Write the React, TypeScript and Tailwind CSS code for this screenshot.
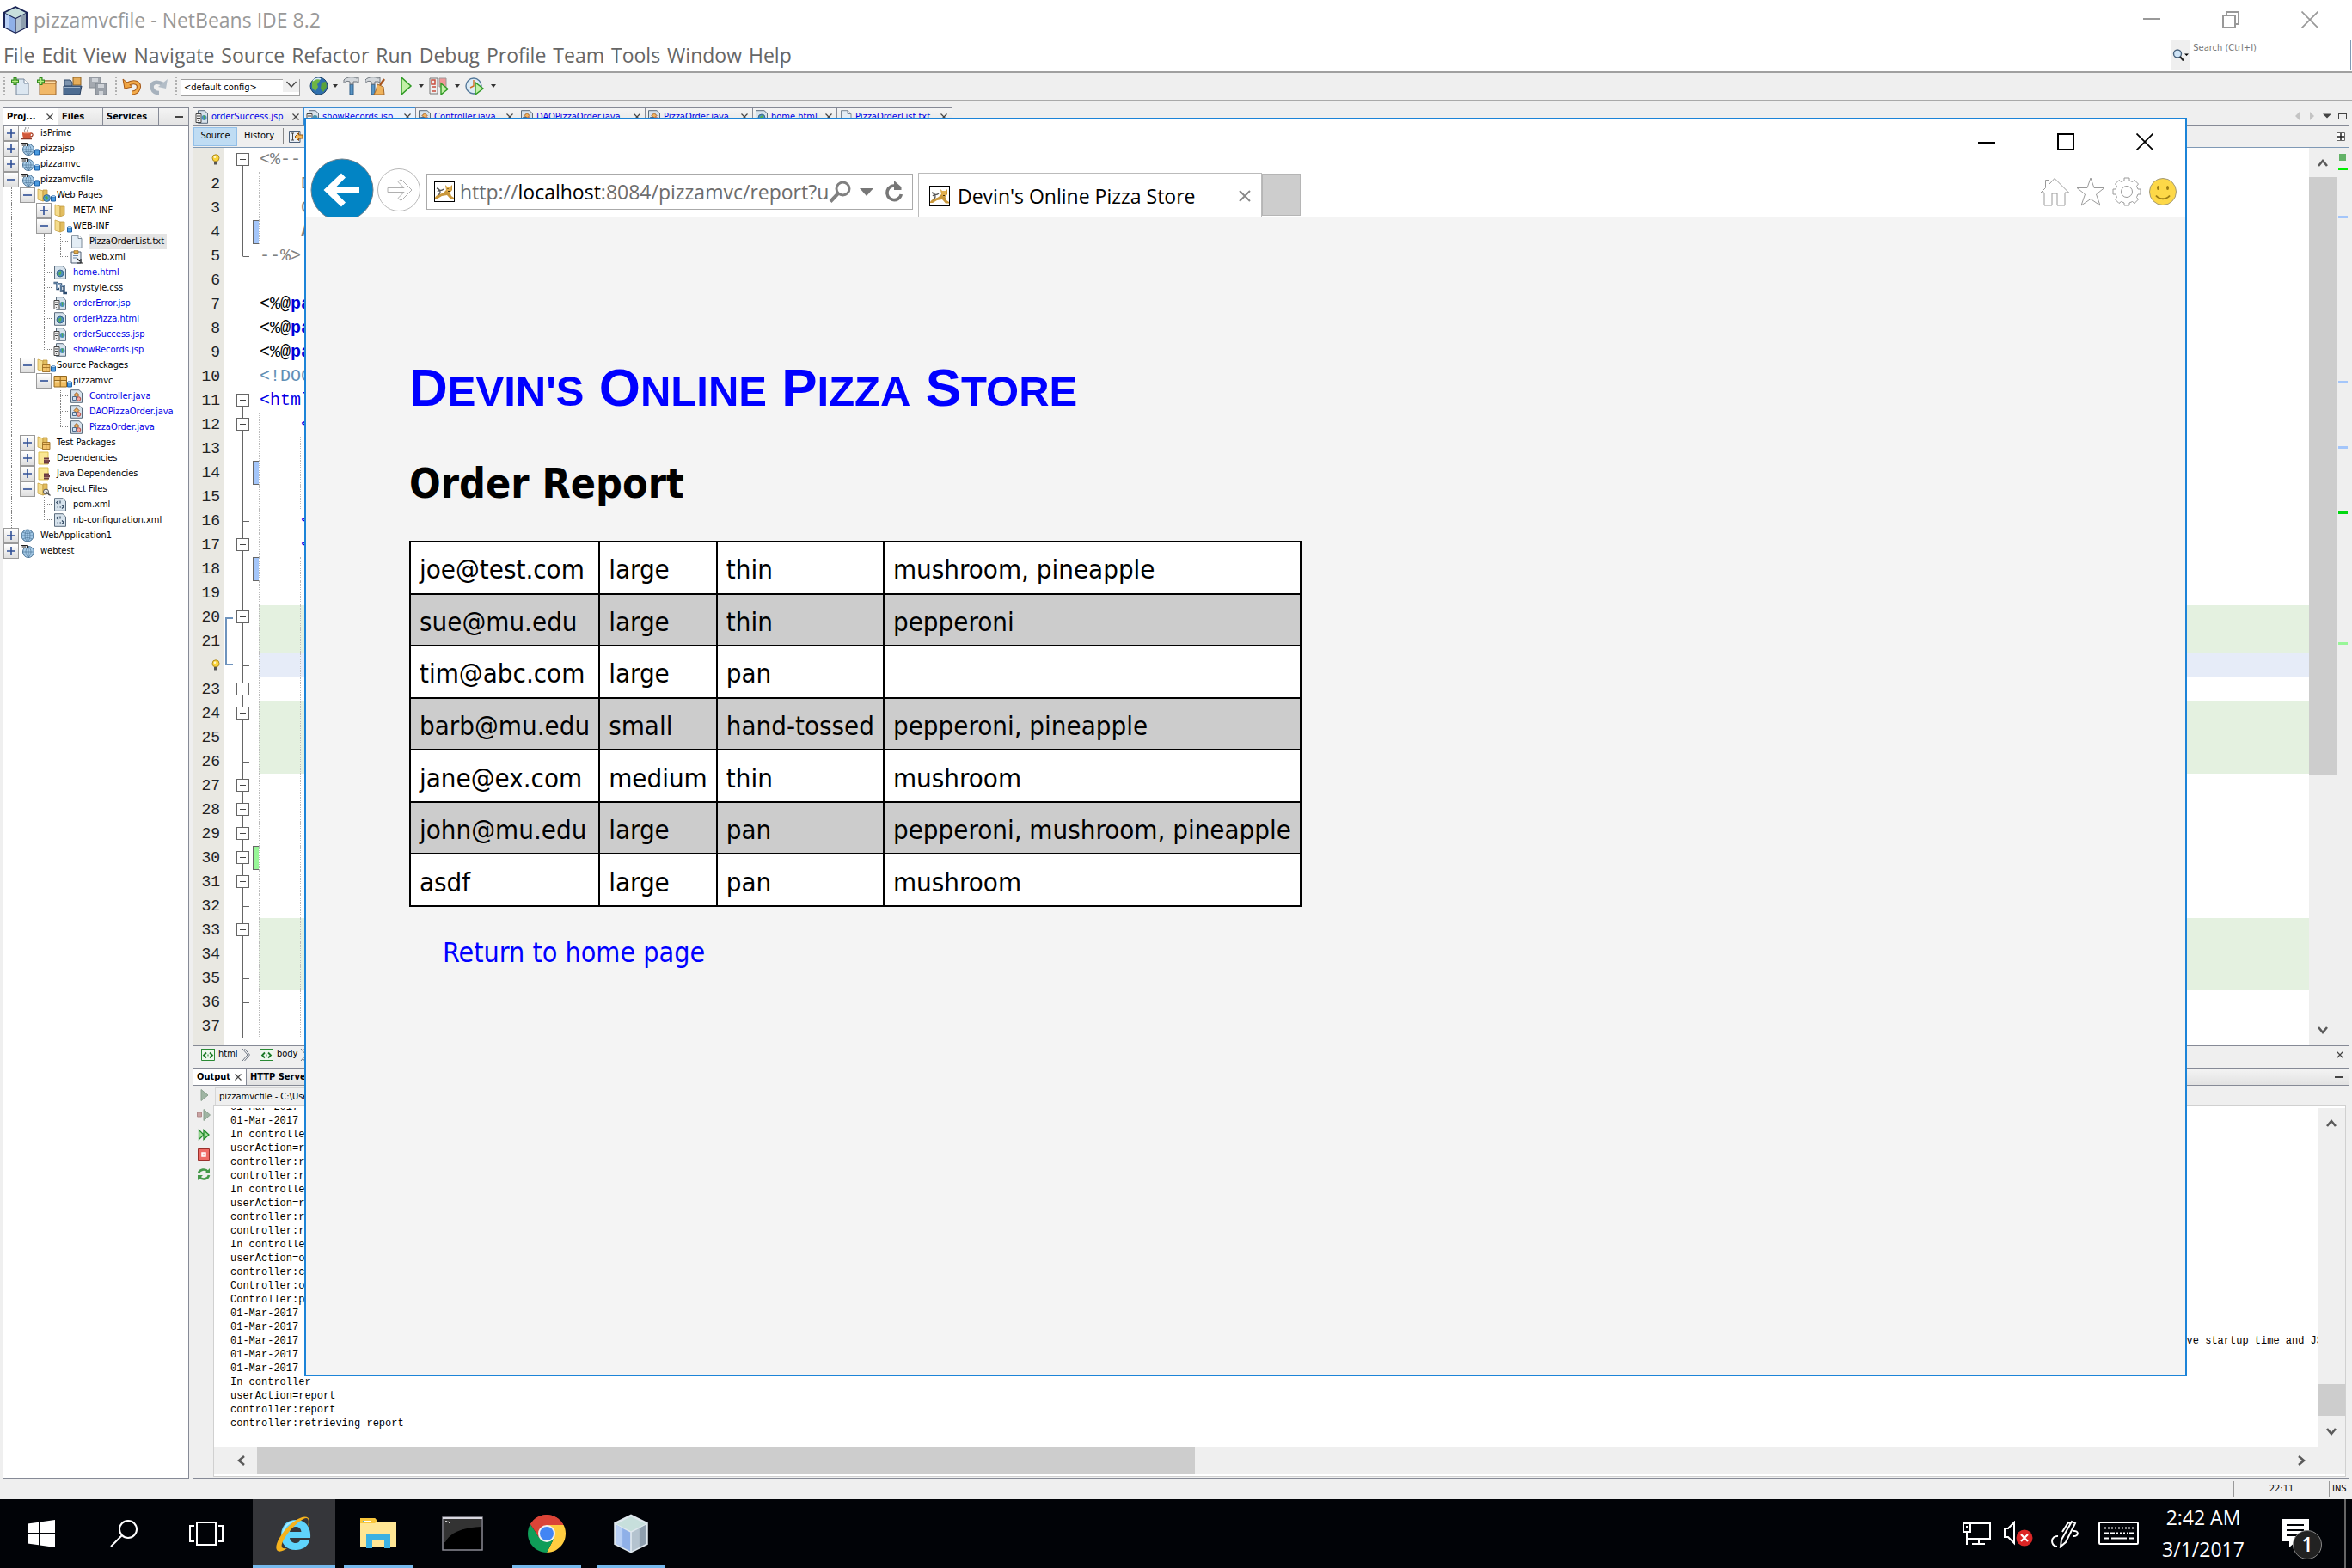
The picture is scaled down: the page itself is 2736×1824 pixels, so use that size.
import React from "react";

type IconProps = { className?: string };

const TAHOMA = "font-['DejaVu_Sans_Condensed','DejaVu_Sans',sans-serif]";
const SEGOE = "font-['Open_Sans','Noto_Sans',sans-serif]";
const MONO = "font-['Liberation_Mono',monospace]";

/* ---------- logos ---------- */

function Cube({ className, outlined }: IconProps & { outlined?: boolean }) {
  return (
    <svg viewBox="0 0 32 34" className={className} aria-hidden="true">
      <path d="M16 1 30 8V26L16 33 2 26V8Z" fill={outlined ? "#1b2556" : "#dfe8ee"} />
      <path d="M16 3 28 9 16 15 4 9Z" fill="#c7dfdc" />
      <path d="M4 10 15.400 16V31.500L4 25.500Z" fill="#8fb0e8" />
      <path d="M4 10 9 12.500V28L4 25.500Z" fill="#b9d0f5" />
      <path d="M28 10 16.600 16V31.500L28 25.500Z" fill="#b4c3cf" />
      <path d="M28 10 23 12.500V28L28 25.500Z" fill="#8e9fae" />
    </svg>
  );
}

function TomcatIcon({ className }: IconProps) {
  return (
    <svg viewBox="0 0 24 24" className={className} aria-hidden="true">
      <rect x="0.500" y="0.500" width="23" height="23" fill="#fff" stroke="#000" />
      <path d="M1 19C3 15 8 15 11 13L14 10 13 4 15.500 6.500H18.500L21 4V10L18.500 13 20 17 23 19V20.500H19L15 16 9 17 4 20H1Z" fill="#c9973a" />
      <path d="M14 6H20L19.500 11 17 13 14.500 11Z" fill="#e2b04f" />
      <path d="M4 16C9 14 7 9 3 8M4 12C6 9 8 12 11 9" fill="none" stroke="#555" strokeWidth="1.300" />
      <path d="M15.500 8.500H16.500M18 8.500H19M16 11.500H18" stroke="#3d2d0d" strokeWidth="1" />
    </svg>
  );
}

function WindowsIcon() {
  return (
    <svg viewBox="0 0 32 32" className="size-8" fill="#fff" aria-hidden="true">
      <path d="M0 4.500 13 2.700V15H0ZM14.500 2.500 32 0V15H14.500ZM0 16.500H13V29.300L0 27.500ZM14.500 16.500H32V32L14.500 29.500Z" />
    </svg>
  );
}

function ExplorerE() {
  return (
    <svg viewBox="0 0 44 44" className="size-11" aria-hidden="true">
      <path d="M24 6C13 6 7 14 7 24S13 41 24 41C32 41 38 37 40 30H29C28 32 26.500 33 24 33 20 33 17.500 30.500 17 27H41C42 14 35 6 24 6ZM17 20C17.500 16 20 14 24 14S30 16 30.500 20Z" fill="#5fd4fb" />
      <path d="M24 8C15 8 9 15 9 24" fill="none" stroke="#a9ecff" strokeWidth="2" />
      <path d="M38 14C44 1 34-1 22 8 8 18-3 38 3 42 6 44 11 41 14 39 8 40 6 38 9 31 13 22 25 9 33 5 39 2 40 7 38 14Z" fill="#f5b21c" />
    </svg>
  );
}

function FolderLarge() {
  return (
    <svg viewBox="0 0 42 36" className="h-9 w-[42px]" aria-hidden="true">
      <path d="M0 0H17L20 4H42V34H0Z" fill="#ffe694" />
      <path d="M0 0H17L20 3 17 6H0Z" fill="#f8c63b" />
      <path d="M3 3H12V5H3Z" fill="#fff" />
      <path d="M3 3H5V5H3Z" fill="#3bb1e3" />
      <path d="M7 18H35V35H28V25H14V35H7Z" fill="#3bb1e3" />
    </svg>
  );
}

function ConsoleIcon() {
  return (
    <svg viewBox="0 0 48 40" className="h-10 w-12" aria-hidden="true">
      <rect x="1" y="1" width="46" height="38" fill="#000" stroke="#8a8a94" strokeWidth="1.500" />
      <path d="M2 3H46V12C25 13 10 18 4 30H2Z" fill="#333" />
      <path d="M1 2H47" stroke="#d8d8e0" strokeWidth="2" />
      <path d="M4 5.500H6M7 5.500V7M8 7.500H10" stroke="#ccc" />
    </svg>
  );
}

function ChromeIcon() {
  return (
    <svg viewBox="0 0 44 44" className="size-11" aria-hidden="true">
      <path d="M22 22 2.950 11A22 22 0 0 1 41.050 11Z" fill="#db4437" />
      <path d="M22 12H41.600A22 22 0 0 1 22 44L30.700 27Z" fill="#ffcd40" />
      <path d="M13.300 27 2.950 11A22 22 0 0 0 22 44L30.700 27Z" fill="#0f9d58" />
      <path d="M22 12H41.600A22 22 0 0 0 2.950 11L13.300 27Z" fill="#db4437" />
      <circle cx="22" cy="22" r="10" fill="#f1f1f1" />
      <circle cx="22" cy="22" r="8" fill="#4285f4" />
    </svg>
  );
}

/* ---------- project tree icons ---------- */

function Glyph({ kind }: { kind: string }) {
  const body: Record<string, React.ReactNode> = {
    cup: (
      <>
        <path d="M2 7H12C12 12 11 14 9.500 15H4.500C3 14 2 12 2 7Z" fill="#d1583a" />
        <path d="M12 8C15 8 15 12 11 12" fill="none" stroke="#a8432c" strokeWidth="1.300" />
        <path d="M1 14.500H13" stroke="#8b3a2a" strokeWidth="1.500" />
        <path d="M5 6C3 4 7 3 5.500 1M8 6C6.500 4 10 3 9 1" fill="none" stroke="#777" />
        <ellipse cx="7" cy="7" rx="5" ry="1.300" fill="#f0a68f" />
      </>
    ),
    web: (
      <>
        <circle cx="8" cy="8" r="7" fill="#9fc6e6" stroke="#466f92" />
        <path d="M1 8H15M8 1V15M3 4C6 6 10 6 13 4M3 12C6 10 10 10 13 12M8 1C4 4 4 12 8 15M8 1C12 4 12 12 8 15" fill="none" stroke="#557d9f" strokeWidth="0.800" />
      </>
    ),
    mweb: (
      <>
        <circle cx="9" cy="9" r="6.500" fill="#a9cde9" stroke="#466f92" />
        <path d="M3 9H15M9 3V15M4 12C7 11 11 11 14 12M9 3C5 6 5 12 9 15M9 3C13 6 13 12 9 15" fill="none" stroke="#557d9f" strokeWidth="0.800" />
        <path d="M0 0H8V5H0Z" fill="#fff" opacity="0.700" />
        <path d="M0.700 5V1.500H3V5M3 1.500H5V5M5 1.500H7.500V5" fill="none" stroke="#222" strokeWidth="1" />
      </>
    ),
    folder: (
      <>
        <path d="M2 1 8 3V15L2 13Z" fill="#f5dc8c" stroke="#c9a448" strokeWidth="0.800" />
        <path d="M8 3H13L13 13 8 15Z" fill="#e2bd60" stroke="#c09a40" strokeWidth="0.800" />
      </>
    ),
    webfolder: (
      <>
        <path d="M1 1 7 3V15L1 13Z" fill="#f5dc8c" stroke="#c9a448" strokeWidth="0.800" />
        <path d="M7 2H12V13L7 15Z" fill="#e2bd60" stroke="#c09a40" strokeWidth="0.800" />
        <circle cx="11.500" cy="11.500" r="4" fill="#4e9ad0" stroke="#2b5d86" strokeWidth="0.800" />
        <path d="M9 10 12 9 13 12 11 14Z" fill="#4fae49" />
      </>
    ),
    srcfolder: (
      <>
        <path d="M1 1 7 3V15L1 13Z" fill="#f5dc8c" stroke="#c9a448" strokeWidth="0.800" />
        <path d="M7 2H12V13L7 15Z" fill="#e2bd60" stroke="#c09a40" strokeWidth="0.800" />
        <path d="M6.500 7.500H15V15.500H6.500Z" fill="#f2c36b" stroke="#9c6e24" strokeWidth="0.900" />
        <path d="M6.500 10.500H15M10.700 7.500V15.500" stroke="#9c6e24" strokeWidth="0.900" />
      </>
    ),
    package: (
      <>
        <path d="M1 2.500H15.500V15H1Z" fill="#efbd61" stroke="#94681f" />
        <path d="M1 7.500H15.500M8.200 2.500V15" stroke="#94681f" />
        <path d="M2 3.500H7M9.500 3.500H14.500M2 8.800H7M9.500 8.800H14.500" stroke="#fde6b0" />
      </>
    ),
    deps: (
      <>
        <path d="M2 1H13V15H2Z" fill="#fae793" stroke="#dcbf4f" />
        <path d="M8 8.500H14M8 11H15M8 13.500H14" stroke="#6b3940" strokeWidth="2" />
        <path d="M9 9.800H14M9 12.300H15" stroke="#b48a90" strokeWidth="0.600" />
      </>
    ),
    projfolder: (
      <>
        <path d="M1 1 7 3V15L1 13Z" fill="#f5dc8c" stroke="#c9a448" strokeWidth="0.800" />
        <path d="M7 2H12V13L7 15Z" fill="#e2bd60" stroke="#c09a40" strokeWidth="0.800" />
        <circle cx="10.500" cy="11" r="3" fill="#eee" stroke="#555" />
        <path d="M12 12 15.500 15.500M10 10 14 15" stroke="#555" strokeWidth="1.200" />
      </>
    ),
    file: (
      <>
        <path d="M2.500 0.700H10L14 4.500V15.300H2.500Z" fill="#e3edf5" stroke="#7a8896" />
        <path d="M10 0.700V4.500H14" fill="#fff" stroke="#7a8896" />
      </>
    ),
    webxml: (
      <>
        <path d="M2 2H13V15H2Z" fill="#eef3f8" stroke="#4c5d72" />
        <path d="M5 0.700H10V3.500H5Z" fill="#e6b04a" stroke="#9c6e24" strokeWidth="0.800" />
        <path d="M4 6.500H10M4 9H8M4 11.500H7" stroke="#6b89ab" />
        <path d="M9 10 12 13M13 10V15.500M9 15H15" stroke="#222" strokeWidth="1.100" />
      </>
    ),
    html: (
      <>
        <path d="M1.500 0.700H11L14.500 4V15.300H1.500Z" fill="#d6e2ec" stroke="#5a6b7c" />
        <circle cx="8" cy="9" r="4" fill="#4c8fc0" stroke="#2d5a7d" strokeWidth="0.800" />
        <path d="M6 8 9 6 9.500 9 7 12Z" fill="#58b04c" />
      </>
    ),
    jsp: (
      <>
        <path d="M3.500 0.700H11L14.500 4V15.300H3.500Z" fill="#d6e2ec" stroke="#5a6b7c" />
        <path d="M1 4.500H7V14.500H1Z" fill="#eee" stroke="#444" />
        <path d="M2 7H6M2 9.500H6M3.500 12V12.800" stroke="#444" strokeWidth="1.200" />
        <circle cx="10.500" cy="9" r="3" fill="#4c8fc0" />
        <path d="M9.500 6 11.500 7 10.500 12Z" fill="#4fae49" />
      </>
    ),
    css: (
      <>
        <path d="M0.500 2H4.500V9H7M4.500 3.500H9V11.500H11.500M9 5.500H12.500V14H16" fill="none" stroke="#2c4c70" strokeWidth="2.400" />
        <path d="M1 2H4.500V9M5 3.500H9V11.500M9.500 5.500H12.500V14" fill="none" stroke="#9dbbd8" strokeWidth="0.800" />
      </>
    ),
    java: (
      <>
        <path d="M1.500 0.700H11L14.500 4V15.300H1.500Z" fill="#d6e2ec" stroke="#5a6b7c" />
        <path d="M8 3.500 11 6.500 8 9.500 5 6.500Z" fill="#f0b05e" stroke="#8a4e1c" strokeWidth="0.900" />
        <path d="M3.500 8.500H7.500V12.500H3.500Z" fill="#cfe0f0" stroke="#3e5f82" strokeWidth="0.900" />
        <circle cx="10.500" cy="11" r="2.300" fill="#f2a9a0" stroke="#b13d32" strokeWidth="0.900" />
      </>
    ),
    xml: (
      <>
        <path d="M1.500 0.700H11L14.500 4V15.300H1.500Z" fill="#d6e2ec" stroke="#5a6b7c" />
        <path d="M6 3.500 3.800 5.500 6 7.500M8 3.500V6.500M10 8.500 12.200 10.500 10 12.500M4.500 11H6M7.500 11H9" fill="none" stroke="#29405a" strokeWidth="1.100" />
      </>
    ),
  };
  return (
    <svg viewBox="0 0 16 16" className="size-4 shrink-0" aria-hidden="true">
      {body[kind]}
    </svg>
  );
}

type Node = {
  label: string;
  icon: string;
  box?: "+" | "-";
  guides?: string;
  blue?: boolean;
  badge?: boolean;
  selected?: boolean;
  last?: boolean;
};

/* guides holds one digit for each ancestor level: 1 draws the dotted line through the row */
const TREE: Node[] = [
  { label: "isPrime", icon: "cup", box: "+" },
  { label: "pizzajsp", icon: "mweb", box: "+", badge: true },
  { label: "pizzamvc", icon: "mweb", box: "+", badge: true },
  { label: "pizzamvcfile", icon: "mweb", box: "-", badge: true },
  { label: "Web Pages", icon: "webfolder", box: "-", guides: "1", badge: true },
  { label: "META-INF", icon: "folder", box: "+", guides: "11" },
  { label: "WEB-INF", icon: "folder", box: "-", guides: "11", badge: true },
  { label: "PizzaOrderList.txt", icon: "file", guides: "111", selected: true },
  { label: "web.xml", icon: "webxml", guides: "111", last: true },
  { label: "home.html", icon: "html", guides: "11", blue: true },
  { label: "mystyle.css", icon: "css", guides: "11" },
  { label: "orderError.jsp", icon: "jsp", guides: "11", blue: true },
  { label: "orderPizza.html", icon: "html", guides: "11", blue: true },
  { label: "orderSuccess.jsp", icon: "jsp", guides: "11", blue: true },
  { label: "showRecords.jsp", icon: "jsp", guides: "11", blue: true, last: true },
  { label: "Source Packages", icon: "srcfolder", box: "-", guides: "1", badge: true },
  { label: "pizzamvc", icon: "package", box: "-", guides: "11", badge: true },
  { label: "Controller.java", icon: "java", guides: "110", blue: true },
  { label: "DAOPizzaOrder.java", icon: "java", guides: "110", blue: true },
  { label: "PizzaOrder.java", icon: "java", guides: "110", blue: true, last: true },
  { label: "Test Packages", icon: "srcfolder", box: "+", guides: "1" },
  { label: "Dependencies", icon: "deps", box: "+", guides: "1" },
  { label: "Java Dependencies", icon: "deps", box: "+", guides: "1" },
  { label: "Project Files", icon: "projfolder", box: "-", guides: "1" },
  { label: "pom.xml", icon: "xml", guides: "10" },
  { label: "nb-configuration.xml", icon: "xml", guides: "10", last: true },
  { label: "WebApplication1", icon: "web", box: "+" },
  { label: "webtest", icon: "mweb", box: "+" },
];

function TreeRow({ node }: { node: Node }) {
  return (
    <li className="flex h-[18px] items-center">
      {(node.guides ?? "").split("").map((g, i) => (
        <span key={i} className="flex h-full w-[19px] shrink-0 justify-center">
          {g === "1" && <span className="w-0 border-l border-dotted border-[#808080]" />}
        </span>
      ))}
      {node.box ? (
        <button
          type="button"
          aria-label={(node.box === "+" ? "Expand " : "Collapse ") + node.label}
          className="flex size-[18px] shrink-0 items-center justify-center border border-[#9a9a9a] bg-gradient-to-b from-white to-[#dedede]"
        >
          <svg viewBox="0 0 12 12" className="size-3" aria-hidden="true">
            <path d={node.box === "+" ? "M1 6H11M6 1V11" : "M1 6H11"} stroke="#2f4f96" strokeWidth="1.600" />
          </svg>
        </button>
      ) : (
        <span className="flex h-full w-[18px] shrink-0 justify-end">
          <span className="flex h-full w-[9px] flex-col">
            <span className="h-[9px] border-b border-l border-dotted border-[#808080]" />
            {!node.last && <span className="h-[9px] border-l border-dotted border-[#808080]" />}
          </span>
        </span>
      )}
      <span className="ml-[2px] flex w-[23px] shrink-0 items-center">
        <Glyph kind={node.icon} />
        {node.badge && (
          <svg viewBox="0 0 6 8" className="mt-2 h-2 w-[6px]" aria-hidden="true">
            <path d="M0.500 1.500H5.500V7H0.500Z" fill="#4a9be0" stroke="#1d5fa5" />
            <ellipse cx="3" cy="1.500" rx="2.500" ry="1" fill="#c3e0fa" stroke="#1d5fa5" strokeWidth="0.600" />
          </svg>
        )}
      </span>
      <span
        className={
          "whitespace-nowrap text-[11px] leading-[18px] " +
          (node.blue ? "text-[#0000e6] " : "text-black ") +
          (node.selected ? "bg-[#e4e4e4] pr-[3px]" : "")
        }
      >
        {node.label}
      </span>
    </li>
  );
}

function CloseX({ className }: IconProps) {
  return (
    <svg viewBox="0 0 8 8" className={className ?? "size-2"} aria-hidden="true">
      <path d="M0.500 0.500 7.500 7.500M7.500 0.500 0.500 7.500" stroke="#444" strokeWidth="1.200" />
    </svg>
  );
}

function ProjectsPanel() {
  return (
    <aside className="flex w-[217px] shrink-0 flex-col border border-[#868a96] bg-white">
      <div className="flex h-5 shrink-0 items-stretch border-b border-[#868a96] bg-gradient-to-b from-[#f4f4f4] to-[#e4e4e4] text-[11px] font-bold leading-[19px]">
        <button type="button" className="flex w-16 items-center justify-between border-r border-[#868a96] bg-white pl-1 pr-[5px]">
          Proj... <CloseX />
        </button>
        <button type="button" className="w-[52px] border-r border-[#868a96] pl-1 text-left">Files</button>
        <button type="button" className="w-[65px] border-r border-[#868a96] pl-1 text-left">Services</button>
        <button type="button" aria-label="Minimize" className="flex flex-1 items-center justify-end pr-[6px]">
          <span className="h-[2px] w-[10px] bg-[#444]" />
        </button>
      </div>
      <ul>
        {TREE.map((n, i) => (
          <TreeRow key={i} node={n} />
        ))}
      </ul>
    </aside>
  );
}

/* ---------- main toolbar ---------- */

function ToolButton({ label, children }: { label: string; children: React.ReactNode }) {
  return (
    <button type="button" aria-label={label} className="w-6 shrink-0">
      <svg viewBox="0 0 24 22" className="h-[22px] w-6" aria-hidden="true">
        {children}
      </svg>
    </button>
  );
}

function Grip() {
  return <span className="h-[22px] w-0 shrink-0 border-l-2 border-dotted border-[#b0b0b0]" />;
}

function Caret() {
  return (
    <svg viewBox="0 0 6 4" className="h-1 w-[6px] shrink-0" aria-hidden="true">
      <path d="M0 0H6L3 4Z" fill="#333" />
    </svg>
  );
}

function MainToolbar() {
  return (
    <div className="flex h-[35px] shrink-0 items-center border-y-2 border-b-[#a9a9a9] border-t-[#a0a0a0] bg-[#efefef] pb-[2px] pl-1">
      <Grip />
      <div className="ml-[6px] flex gap-[6px]">
        <ToolButton label="New File">
          <path d="M7 3H16L21 8V21H7Z" fill="#dce7f1" stroke="#75869a" />
          <path d="M16 3V8H21" fill="#fff" stroke="#75869a" />
          <path d="M5.500 1V10M1 5.500H10" stroke="#2f8a1e" strokeWidth="4" />
          <path d="M5.500 2V9M2 5.500H9" stroke="#b5ec7f" strokeWidth="1.600" />
        </ToolButton>
        <ToolButton label="New Project">
          <path d="M4 5H23V21H4Z" fill="#f1b868" stroke="#9b642a" />
          <path d="M4 5H23V8H4Z" fill="#fbdca6" stroke="#9b642a" />
          <path d="M5.500 1V10M1 5.500H10" stroke="#2f8a1e" strokeWidth="4" />
          <path d="M5.500 2V9M2 5.500H9" stroke="#b5ec7f" strokeWidth="1.600" />
        </ToolButton>
        <ToolButton label="Open Project">
          <path d="M13 1H22V10H13Z" fill="#e5ad5b" stroke="#8c6023" />
          <path d="M3 4H10L12 7V20H3Z" fill="#7c93ad" stroke="#2f4868" />
          <path d="M2 11H23L21 21H2Z" fill="#4d6c91" stroke="#2a4160" />
          <path d="M3 12.500H21" stroke="#9db3cb" />
        </ToolButton>
        <ToolButton label="Save All">
          <path d="M2 1H15V13H2Z" fill="#a4a9b0" stroke="#858b93" />
          <path d="M9 8H22V21H9Z" fill="#9ba1a9" stroke="#7d838b" />
          <path d="M5 2H12V6H5ZM12 9H19V13H12ZM13 17H18V21H13Z" fill="#cfd3d8" />
        </ToolButton>
      </div>
      <span className="w-2" />
      <Grip />
      <div className="ml-[6px] flex gap-[6px]">
        <ToolButton label="Undo">
          <path d="M6 9C15 4 21 8 19 14 18 17 15 19 11 19" fill="none" stroke="#a55714" strokeWidth="5" />
          <path d="M1 3 3 14 12 12Z" fill="#efa340" stroke="#a55714" />
          <path d="M6 9C15 4 21 8 19 14 18 17 15 19 11 19" fill="none" stroke="#f2ab4b" strokeWidth="3" />
        </ToolButton>
        <ToolButton label="Redo">
          <path d="M18 9C9 4 3 8 5 14 6 17 9 19 13 19" fill="none" stroke="#a7b2bd" strokeWidth="4.500" />
          <path d="M23 3 21 14 12 12Z" fill="#b3bdc7" />
        </ToolButton>
      </div>
      <span className="w-2" />
      <Grip />
      <label className="relative ml-1 block">
        <span className="sr-only">Configuration</span>
        <select className="h-[20px] w-[139px] appearance-none border border-[#a0a0a0] bg-white pl-[3px] text-[11px] leading-[18px] text-black">
          <option>&lt;default config&gt;</option>
        </select>
        <span className="pointer-events-none absolute right-px top-px flex h-[18px] w-[19px] items-center justify-center bg-[#efefef]">
          <svg viewBox="0 0 12 8" className="h-2 w-3" aria-hidden="true">
            <path d="M0.500 1 6 7 11.500 1" fill="none" stroke="#444" strokeWidth="1.300" />
          </svg>
        </span>
      </label>
      <div className="ml-[10px] flex items-center gap-1">
        <ToolButton label="Run browser">
          <circle cx="12" cy="11" r="10" fill="#2f6fae" stroke="#1f4468" />
          <path d="M4 6C8 0 14 2 13 5L10 9 11 12 8 17 4 13Z" fill="#6fb544" />
          <path d="M15 7 20 6 21 12 17 18 14 14Z" fill="#5aa33a" />
          <path d="M5 5C7 2 12 2 14 3" fill="none" stroke="#d9edff" strokeWidth="1.600" />
        </ToolButton>
        <Caret />
        <ToolButton label="Build">
          <path d="M10 9H14V21H10Z" fill="#5a96c6" stroke="#2d5d87" />
          <path d="M3 4C6 0 15 0 18 2L20 1V7L18 6H14V9H10V6C7 5 5 5 3 8Z" fill="#d4d8dc" stroke="#6e757c" />
        </ToolButton>
        <ToolButton label="Clean and Build">
          <path d="M7 9H11V21H7Z" fill="#5a96c6" stroke="#2d5d87" />
          <path d="M0 4C3 0 12 0 15 2L17 1V7L15 6H11V9H7V6C4 5 2 5 0 8Z" fill="#d4d8dc" stroke="#6e757c" />
          <path d="M22 3 17 10" stroke="#a8541c" strokeWidth="2.500" />
          <path d="M14 9 21 12 22 21H10C12 18 13 14 14 9Z" fill="#efb35c" stroke="#a2672a" />
        </ToolButton>
      </div>
      <div className="ml-4 flex items-center gap-[6px]">
        <ToolButton label="Run">
          <path d="M2 1V21L13 11Z" fill="#c3f0a8" stroke="#2f9a24" strokeWidth="1.500" />
        </ToolButton>
        <span className="-ml-2"><Caret /></span>
        <ToolButton label="Debug">
          <path d="M1 2H10V20H1Z" fill="#eee" stroke="#777" />
          <path d="M3 4H7V9H3ZM4 12H8M4 17H8" fill="none" stroke="#c74c3d" strokeWidth="1.500" />
          <path d="M12 2H20V12H12Z" fill="#f19999" stroke="#999" />
          <path d="M14 8V21L22 14.500Z" fill="#c3f0a8" stroke="#2f9a24" strokeWidth="1.400" />
        </ToolButton>
        <Caret />
        <ToolButton label="Profile">
          <circle cx="10" cy="11" r="9" fill="#dcebf5" stroke="#54789a" strokeWidth="1.400" />
          <path d="M10 4V11L6 13" fill="none" stroke="#d07020" strokeWidth="1.400" />
          <path d="M12 7V21L21 14Z" fill="#c3f0a8" stroke="#2f9a24" strokeWidth="1.400" />
        </ToolButton>
        <Caret />
      </div>
    </div>
  );
}

/* ---------- editor ---------- */

type Line = { code?: React.ReactNode; fold?: "box" | "end" | "line"; mark?: "blue" | "green"; bg?: "green" | "blue"; bulb?: boolean; indent?: boolean };

const page = (
  <>
    &lt;%@<b className="text-[#0000d8]">page</b>
  </>
);
const grey = (s: string) => <span className="text-[#808080]">{s}</span>;
const tag = (s: string) => <span className="text-[#0000e6]">{s}</span>;

const LINES: Line[] = [
  { code: grey("<%--"), fold: "box", bulb: true },
  { code: grey("    Document"), fold: "line", indent: true },
  { code: grey("    Created"), fold: "line", indent: true },
  { code: <b>{grey("    Author")}</b>, fold: "line", mark: "blue", indent: true },
  { code: grey("--%>"), fold: "end" },
  {},
  { code: page },
  { code: page },
  { code: page },
  { code: <span className="text-[#628fb5]">&lt;!DOCTYPE html&gt;</span> },
  { code: tag("<html>"), fold: "box" },
  { code: tag("    <head>"), fold: "box", indent: true },
  { fold: "line", indent: true },
  { fold: "line", mark: "blue", indent: true },
  { fold: "line", indent: true },
  { code: tag("    </head>"), fold: "end", indent: true },
  { code: tag("    <body>"), fold: "box", indent: true },
  { fold: "line", mark: "blue", indent: true },
  { fold: "line", indent: true },
  { fold: "box", bg: "green", indent: true },
  { fold: "line", bg: "green", indent: true },
  { fold: "end", bg: "blue", bulb: true, indent: true },
  { fold: "box", indent: true },
  { fold: "box", bg: "green", indent: true },
  { fold: "line", bg: "green", indent: true },
  { fold: "end", bg: "green", indent: true },
  { fold: "box", indent: true },
  { fold: "box", indent: true },
  { fold: "box", indent: true },
  { fold: "box", mark: "green", indent: true },
  { fold: "box", indent: true },
  { fold: "end", indent: true },
  { fold: "box", bg: "green", indent: true },
  { fold: "line", bg: "green", indent: true },
  { fold: "end", bg: "green", indent: true },
  { fold: "end", indent: true },
  { fold: "line", indent: true },
];

function Bulb() {
  return (
    <svg viewBox="0 0 10 14" className="h-[14px] w-[10px]" aria-label="Hint">
      <circle cx="5" cy="4.800" r="4" fill="#fbd53c" stroke="#a5801a" strokeWidth="0.900" />
      <circle cx="4" cy="3.800" r="1.300" fill="#fff6c8" />
      <path d="M3 9H7V12.500H3Z" fill="#555" />
    </svg>
  );
}

function FoldCell({ n, kind }: { n: number; kind?: Line["fold"] }) {
  const first = n === 1 || n === 11;
  const stop = n === 5;
  return (
    <svg viewBox="0 0 15 28" className="ml-[13px] h-7 w-[15px] shrink-0" aria-hidden="true">
      {kind && <path d={"M7.500 " + (first ? 14 : 0) + "V" + (stop ? 14 : 28)} stroke="#666" />}
      {kind === "end" && <path d="M7.500 14.500H15" stroke="#666" />}
      {kind === "box" && (
        <>
          <rect x="0.500" y="6.500" width="14" height="14" fill="#fff" stroke="#666" />
          <path d="M4 13.500H11" stroke="#444" />
        </>
      )}
    </svg>
  );
}

function EditorLine({ line, n }: { line: Line; n: number }) {
  const bracket =
    n === 20 ? "mt-[14px] border-l-2 border-t-2" : n === 21 ? "border-l-2" : n === 22 ? "mb-[14px] border-b-2 border-l-2" : "";
  return (
    <div className="flex h-7 shrink-0">
      <div className="flex w-9 shrink-0 items-center justify-end border-r border-[#999] bg-[#e9e8e2] pr-1 text-[18px] leading-7 text-[#222]">
        {line.bulb ? <Bulb /> : n}
      </div>
      <div className="flex w-10 shrink-0">
        <div className="flex w-0 shrink-0 pl-[1px]">
          <span className={"w-[9px] shrink-0 border-[#6e93bd] " + bracket} />
        </div>
        <div className="w-[39px]">
          <div className="flex">
            <FoldCell n={n} kind={line.fold} />
            {line.mark && (
              <span className={"ml-1 h-7 w-[7px] shrink-0 border-y border-l border-[#666] " + (line.mark === "blue" ? "bg-[#a4c6fa]" : "bg-[#98f698]")} />
            )}
          </div>
        </div>
      </div>
      <div
        className={
          "flex min-w-0 flex-1 overflow-hidden whitespace-pre border-l border-dotted text-[20px] leading-7 " +
          (n > 1 && n < 5 || n > 11 ? "border-[#bbb] " : "border-transparent ") +
          (line.bg === "green" ? "bg-[#e4f1e0]" : line.bg === "blue" ? "bg-[#e6ecf8]" : "")
        }
      >
        {line.indent && !line.code && <span className="w-12 shrink-0 border-r border-dotted border-[#bbb]" />}
        {line.code}
      </div>
    </div>
  );
}

const TABS = [
  { label: "orderSuccess.jsp", icon: "jsp", w: "w-[129px]" },
  { label: "showRecords.jsp", icon: "jsp", w: "w-[130px]", active: true },
  { label: "Controller.java", icon: "java", w: "w-[119px]" },
  { label: "DAOPizzaOrder.java", icon: "java", w: "w-[148px]" },
  { label: "PizzaOrder.java", icon: "java", w: "w-[125px]" },
  { label: "home.html", icon: "html", w: "w-[98px]" },
  { label: "PizzaOrderList.txt", icon: "file", w: "w-[134px]" },
];

function Arrow({ dir, className }: { dir: "up" | "down" | "left" | "right"; className?: string }) {
  const d = { up: "M1 9 6 3 11 9", down: "M1 3 6 9 11 3", left: "M9 1 3 6 9 11", right: "M3 1 9 6 3 11" }[dir];
  return (
    <svg viewBox="0 0 12 12" className={"size-3 shrink-0 " + (className ?? "")} aria-hidden="true">
      <path d={d} fill="none" stroke="#5a5a5a" strokeWidth="2.600" />
    </svg>
  );
}

const STRIPES = [
  { top: 23, color: "bg-[#00f000]" },
  { top: 79, color: "bg-[#a4c6fa]" },
  { top: 271, color: "bg-[#a4c6fa]" },
  { top: 347, color: "bg-[#a4c6fa]" },
  { top: 423, color: "bg-[#00d810]" },
  { top: 575, color: "bg-[#98f698]" },
];

function Editor() {
  return (
    <section className="flex min-h-0 flex-1 flex-col">
      <div className="flex h-5 shrink-0 justify-between">
        <div className="flex text-[11px] leading-[19px] text-[#0000e6]">
          {TABS.map((t) => (
            <button
              key={t.label}
              type="button"
              className={
                "flex items-center border-l border-t pl-[2px] pr-[5px] " +
                t.w +
                (t.active ? " border-[#3c8ad0] bg-[#eaf3fc]" : " border-[#868a96] bg-gradient-to-b from-[#f4f4f4] to-[#e6e6e6]")
              }
            >
              <Glyph kind={t.icon} />
              <span className="ml-[3px] flex-1 whitespace-nowrap text-left">{t.label}</span>
              <CloseX />
            </button>
          ))}
        </div>
        <div className="flex items-center pr-[2px]">
          <svg viewBox="0 0 62 12" className="h-3 w-[62px]" aria-hidden="true">
            <path d="M6 1V11L1 6Z" fill="#c4c4c4" />
            <path d="M18 1V11L23 6Z" fill="#c4c4c4" />
            <path d="M33 3.500H43L38 8.500Z" fill="#444" />
            <path d="M51.500 2.500H60.500V9.500H51.500Z" fill="none" stroke="#444" />
            <path d="M51 3H61" stroke="#444" strokeWidth="2" />
          </svg>
        </div>
      </div>
      <div className="flex min-h-0 flex-1 flex-col border border-[#868a96] bg-white">
        <div className="flex h-[26px] shrink-0 items-center border-b border-[#7f99b5] bg-[#efefef] text-[11px]">
          <button type="button" className="h-[22px] w-[51px] border border-[#92bfe8] bg-[#bfdcf3]">Source</button>
          <button type="button" className="h-[19px] w-[54px] border-r border-[#888] pr-[2px] text-center">History</button>
          <svg viewBox="0 0 18 16" className="ml-[6px] h-4 w-[18px]" aria-hidden="true">
            <path d="M0.500 1.500H13V14.500H0.500Z" fill="#e7eef6" stroke="#4c6079" />
            <path d="M3 4H6M4.500 4V12M3 12H6" stroke="#444" />
            <path d="M7 8 11.500 3.500V6H16V10H11.500V12.500Z" fill="#f6b95c" stroke="#8e5517" />
          </svg>
          <svg viewBox="0 0 10 10" className="ml-auto mr-1 size-[10px]" aria-hidden="true">
            <path d="M0.500 0.500H9.500V9.500H0.500Z" fill="#fff" stroke="#666" />
            <path d="M5 1V9M1 5H9" stroke="#222" strokeWidth="1.500" />
          </svg>
        </div>
        <div className="flex min-h-0 flex-1">
          <div className={"flex min-w-0 flex-1 flex-col overflow-hidden " + MONO}>
            {LINES.map((l, i) => (
              <EditorLine key={i} n={i + 1} line={l} />
            ))}
            <div className="flex flex-1">
              <div className="w-9 border-r border-[#999] bg-[#e9e8e2]" />
              <div className="ml-5 border-l border-[#666]" />
            </div>
          </div>
          <div className="flex w-8 shrink-0 flex-col items-center bg-[#efefef]">
            <Arrow dir="up" className="mb-[10px] mt-3" />
            <div className="h-[695px] w-full bg-[#cdcdcd]" />
            <Arrow dir="down" className="mb-3 mt-auto" />
          </div>
          <div className="relative w-[14px] shrink-0 bg-[#efefef] pl-[3px] pt-[7px]">
            <div className="size-2 bg-[#62b267]" />
            {STRIPES.map((s) => (
              <span key={s.top} className={"absolute left-[2px] h-[3px] w-[11px] " + s.color} style={{ top: s.top }} />
            ))}
          </div>
        </div>
        <div className="flex h-5 shrink-0 items-center border-t border-[#868a96] bg-[#efefef] pl-[9px] text-[11px]">
          {["html", "body"].map((t) => (
            <span key={t} className="flex items-center">
              <svg viewBox="0 0 16 14" className="h-[14px] w-4" aria-hidden="true">
                <path d="M0.500 0.500H15.500V13.500H0.500Z" fill="#eef8ee" stroke="#2a8a35" />
                <path d="M0 1H16" stroke="#2a8a35" strokeWidth="2" />
                <path d="M6 4.500 3 7.500 6 10.500M10 4.500 13 7.500 10 10.500M7.500 7.500H8.500" fill="none" stroke="#1c7a28" strokeWidth="1.800" />
              </svg>
              <span className="ml-1 w-[25px]">{t}</span>
              <svg viewBox="0 0 10 16" className="ml-[2px] mr-[11px] h-4 w-[10px]" aria-hidden="true">
                <path d="M1 1 7 8 1 15M3.500 1 9.500 8 3.500 15" fill="none" stroke="#6c7582" />
              </svg>
            </span>
          ))}
          <button type="button" aria-label="Close breadcrumbs" className="ml-auto mr-[6px]"><CloseX /></button>
        </div>
      </div>
    </section>
  );
}

/* ---------- output ---------- */

const STAMP = "01-Mar-2017 02:40:47.123 INFO ";
const OUTPUT = [
  STAMP,
  STAMP,
  "In controller",
  "userAction=report",
  "controller:report",
  "controller:retrieving report",
  "In controller",
  "userAction=report",
  "controller:report",
  "controller:retrieving report",
  "In controller",
  "userAction=order",
  "controller:create order",
  "Controller:order",
  "Controller:place order",
  STAMP,
  STAMP,
  STAMP +
    "[http-exec-104] org.apache.jasper.servlet.TldScanner.scanJars At least one JAR was scanned for TLDs yet contained no TLDs. Enable debug logging for this logger for a complete list of JARs that were scanned but no TLDs were found in them. Skipping unneeded JARs during scanning can improve startup time and JSP compilation time.",
  STAMP,
  STAMP,
  "In controller",
  "userAction=report",
  "controller:report",
  "controller:retrieving report",
];

function Output() {
  return (
    <section className="flex h-[478px] shrink-0 flex-col border border-[#868a96] bg-[#efefef]">
      <div className="flex h-5 shrink-0 border-b border-[#868a96] bg-gradient-to-b from-[#f4f4f4] to-[#e2e2e2] text-[11px] font-bold leading-[19px]">
        <button type="button" className="flex w-[62px] items-center justify-between border-r border-[#868a96] bg-white pl-1 pr-[5px]">
          Output <CloseX />
        </button>
        <button type="button" className="whitespace-nowrap px-1">HTTP Server Monitor</button>
        <button type="button" aria-label="Minimize output" className="ml-auto flex items-center pr-[6px]">
          <span className="h-[2px] w-[10px] bg-[#444]" />
        </button>
      </div>
      <div className="flex min-h-0 flex-1">
        <div className="flex w-[23px] shrink-0 flex-col items-center gap-[7px] pt-[3px]">
          <svg viewBox="0 0 16 16" className="size-4" aria-hidden="true"><path d="M5 1.500V14.500L13 8Z" fill="#9fb5a3" stroke="#8aa08e" /></svg>
          <svg viewBox="0 0 16 16" className="size-4" aria-hidden="true"><path d="M0.500 5H5.500V10H0.500Z" fill="#c9a3a3" stroke="#b08a8a" /><path d="M8 1.500V14.500L15.500 8Z" fill="#9fb5a3" stroke="#8aa08e" /></svg>
          <svg viewBox="0 0 16 16" className="size-4" aria-hidden="true"><path d="M2.500 2.500V13.500L8 8ZM8 2.500V13.500L14 8Z" fill="#a8e2a0" stroke="#218a2a" strokeWidth="1.300" /></svg>
          <svg viewBox="0 0 16 16" className="size-4" aria-hidden="true"><path d="M1.500 1.500H14.500V14.500H1.500Z" fill="#ee6b66" stroke="#9a302c" /><path d="M6 6H10V10H6Z" fill="#f8bab6" stroke="#fff" strokeWidth="1.500" /></svg>
          <svg viewBox="0 0 16 16" className="size-4" aria-hidden="true"><path d="M2 7C3 2 10 1 13 5M14 9C13 14 6 15 3 11" fill="none" stroke="#45994a" strokeWidth="2.600" /><path d="M15 1V7H9ZM1 15V9H7Z" fill="#45994a" /></svg>
        </div>
        <div className="mb-px mr-[3px] flex min-w-0 flex-1 flex-col">
          <div className="h-[22px] shrink-0 pl-[2px] pt-[2px]">
            <div className="h-full w-[560px] border-l border-t border-[#d6d6d6] pl-1 text-[11px] leading-[19px]">pizzamvcfile - C:\Users\devin\Documents\pizzamvcfile</div>
          </div>
          <div className="flex min-h-0 flex-1 flex-col border border-[#d0d0d0] bg-white pb-[2px] pt-[3px]">
            <div className="flex min-h-0 flex-1">
              <div className={"flex min-w-0 flex-1 flex-col overflow-hidden pl-[19px] text-[12px] leading-4 text-black " + MONO}>
                <div className="-mt-[9px] whitespace-pre">
                  {OUTPUT.map((l, i) => (
                    <div key={i}>{l}</div>
                  ))}
                </div>
              </div>
              <div className="flex w-8 shrink-0 flex-col items-center bg-[#efefef]">
                <Arrow dir="up" className="mt-3" />
                <div className="mb-3 mt-auto h-[37px] w-full bg-[#cdcdcd]" />
                <Arrow dir="down" className="mb-3" />
              </div>
            </div>
            <div className="flex h-8 shrink-0 items-center bg-[#efefef]">
              <Arrow dir="left" className="ml-[26px] mr-3" />
              <div className="h-full w-[44%] bg-[#cdcdcd]" />
              <Arrow dir="right" className="ml-auto mr-[45px]" />
            </div>
          </div>
        </div>
      </div>
    </section>
  );
}

/* ---------- browser window ---------- */

const ORDERS = [
  ["joe@test.com", "large", "thin", "mushroom, pineapple"],
  ["sue@mu.edu", "large", "thin", "pepperoni"],
  ["tim@abc.com", "large", "pan", ""],
  ["barb@mu.edu", "small", "hand-tossed", "pepperoni, pineapple"],
  ["jane@ex.com", "medium", "thin", "mushroom"],
  ["john@mu.edu", "large", "pan", "pepperoni, mushroom, pineapple"],
  ["asdf", "large", "pan", "mushroom"],
];

function Report() {
  return (
    <main className={"flex-1 bg-[#f4f4f4] pl-[120px] pt-[165px] " + TAHOMA}>
      <h1 className="font-['Liberation_Sans',Arial,sans-serif] text-[49px] font-bold uppercase leading-[76px] text-[#0000ff]">
        {["Devin's", "Online", "Pizza", "Store"].map((w, i) => (
          <React.Fragment key={w}>
            {i > 0 && <span className="text-[62px] leading-none"> </span>}
            <span className="text-[62px] leading-none">{w[0]}</span>
            {w.slice(1)}
          </React.Fragment>
        ))}
      </h1>
      <h2 className="mt-10 text-[48px] font-bold leading-[58px] text-black">Order Report</h2>
      <table className="mt-[38px] h-[426px] border-collapse bg-white text-[31px] leading-[38px] text-black">
        <tbody>
          {ORDERS.map((row) => (
            <tr key={row[0]} className="even:bg-[#cccccc]">
              {row.map((c, i) => (
                <td key={i} className="whitespace-nowrap border-2 border-black px-[10px] pt-1">{c}</td>
              ))}
            </tr>
          ))}
        </tbody>
      </table>
      <p className="ml-[39px] mt-[34px] text-[32px] leading-[38px]">
        <a href="#home" className="text-[#0000ff]">Return to home page</a>
      </p>
    </main>
  );
}

function Browser() {
  return (
    <section
      aria-label="Browser"
      className={"absolute bottom-[223px] left-[354px] right-[192px] top-[137px] flex flex-col overflow-hidden border-2 border-[#1c84d8] bg-white " + SEGOE}
    >
      <div className="flex h-[113px] shrink-0 flex-col overflow-hidden">
        <div className="flex h-[45px] shrink-0 items-end justify-end gap-[72px] pb-[9px] pr-[37px]">
          <button type="button" aria-label="Minimize window"><svg viewBox="0 0 20 20" className="size-5"><path d="M0 11H20" stroke="#000" strokeWidth="2" /></svg></button>
          <button type="button" aria-label="Maximize window"><svg viewBox="0 0 20 20" className="size-5"><path d="M1 1H19V19H1Z" fill="none" stroke="#000" strokeWidth="2" /></svg></button>
          <button type="button" aria-label="Close window"><svg viewBox="0 0 20 20" className="size-5"><path d="M0.500 0.500 19.500 19.500M19.500 0.500 0.500 19.500" stroke="#000" strokeWidth="1.700" /></svg></button>
        </div>
        <div className="flex h-[80px] shrink-0 items-start">
          <button type="button" aria-label="Back" className="ml-[5px] shrink-0">
            <svg viewBox="0 0 74 74" className="size-[74px]">
              <circle cx="37" cy="37" r="36" fill="#0284c4" stroke="#6f7f8a" />
              <path d="M57 33H30.500L41 22.500 36 17.500 15.500 37 36 56.500 41 51.500 30.500 41H57Z" fill="#fff" />
            </svg>
          </button>
          <button type="button" aria-label="Forward" className="ml-1 mt-3 shrink-0">
            <svg viewBox="0 0 50 50" className="size-[50px]">
              <circle cx="25" cy="25" r="24.500" fill="#fff" stroke="#b8b8b8" />
              <path d="M12 22.500H31L24 15.500 27.500 12.500 40 25 27.500 37.500 24 34.500 31 27.500H12Z" fill="#fff" stroke="#b0b0b0" />
            </svg>
          </button>
          <div className="ml-[7px] mt-[18px] flex h-[42px] w-[566px] shrink-0 items-center border border-[#aaa] pl-2">
            <TomcatIcon className="size-6 shrink-0" />
            <div className="ml-[6px] w-[429px] shrink-0 overflow-hidden whitespace-nowrap text-[23px] leading-[38px] text-[#6d6d6d]">
              http://<span className="text-black">localhost</span>:8084/pizzamvc/report?u
            </div>
            <button type="button" aria-label="Search" className="shrink-0">
              <svg viewBox="0 0 26 26" className="size-[26px]"><circle cx="16.500" cy="9.500" r="7.500" fill="none" stroke="#808080" strokeWidth="3" /><path d="M11 15 2 24.500" stroke="#808080" strokeWidth="4" /></svg>
            </button>
            <svg viewBox="0 0 16 9" className="ml-[10px] h-[9px] w-4 shrink-0" aria-hidden="true"><path d="M0 0H16L8 9Z" fill="#777" /></svg>
            <button type="button" aria-label="Refresh" className="ml-3 shrink-0">
              <svg viewBox="0 0 24 26" className="h-[26px] w-6"><path d="M15 6.500A8.300 8.300 0 1 0 20.300 16" fill="none" stroke="#777" strokeWidth="3.600" /><path d="M12 0 20.500 7.500V11H12Z" fill="#777" /></svg>
            </button>
          </div>
          <div className="ml-[6px] mt-[17px] flex h-[52px] w-[400px] shrink-0 items-center border border-b-0 border-[#bbb] pl-3 pr-[12px]">
            <TomcatIcon className="size-6 shrink-0" />
            <span className="ml-[9px] whitespace-nowrap text-[23px] leading-[30px] text-black">Devin's Online Pizza Store</span>
            <button type="button" aria-label="Close tab" className="ml-auto">
              <svg viewBox="0 0 14 14" className="size-[14px]"><path d="M1 1 13 13M13 1 1 13" stroke="#888" strokeWidth="2" /></svg>
            </button>
          </div>
          <button type="button" aria-label="New tab" className="mt-[18px] h-[49px] w-[45px] shrink-0 border border-[#b5b5b5] bg-[#cdcdcd]" />
          <div className="ml-auto mr-[9px] mt-[22px] flex gap-2">
            <svg viewBox="0 0 34 34" className="size-[34px]" fill="none" stroke="#9a9a9a" aria-label="Home">
              <path d="M1 18 6.500 12.500V3.500H10.500V8.500L17 1.500 33.500 18H29V33H20V19H14V33H5V18Z" />
            </svg>
            <svg viewBox="0 0 34 34" className="size-[34px]" fill="none" stroke="#9a9a9a" aria-label="Favorites">
              <path d="M17 1 21 12.500 33 12.500 23.500 20 28 33 17 25.500 6 33 10.500 20 1 12.500 13 12.500Z" />
            </svg>
            <svg viewBox="0 0 34 34" className="size-[34px]" fill="none" stroke="#9a9a9a" aria-label="Tools">
              <circle cx="17" cy="17" r="6.500" />
              <path d="M14 4V1H20V4L23.500 5.500 26 3.500 30.500 8 28.500 10.500 30 14H33V20H30L28.500 23.500 30.500 26 26 30.500 23.500 28.500 20 30V33H14V30L10.500 28.500 8 30.500 3.500 26 5.500 23.500 4 20H1V14H4L5.500 10.500 3.500 8 8 3.500 10.500 5.500Z" />
            </svg>
            <svg viewBox="0 0 34 34" className="size-[34px]" aria-label="Feedback">
              <circle cx="17" cy="17" r="15.500" fill="#fdd848" stroke="#a39a78" />
              <ellipse cx="11.500" cy="12.500" rx="1.500" ry="2.500" fill="#9a7b14" />
              <ellipse cx="22.500" cy="12.500" rx="1.500" ry="2.500" fill="#9a7b14" />
              <path d="M9 21.500C13 26.500 21 26.500 25 21.500" fill="none" stroke="#9a7b14" strokeWidth="2" />
            </svg>
          </div>
        </div>
      </div>
      <Report />
    </section>
  );
}

/* ---------- taskbar ---------- */

function Task({ label, running, active, children }: { label: string; running?: boolean; active?: boolean; children: React.ReactNode }) {
  return (
    <button
      type="button"
      aria-label={label}
      className={"relative flex h-full w-24 items-center justify-center " + (active ? "bg-[#35363a]" : "")}
    >
      {children}
      {running && <span className={"absolute bottom-0 h-1 bg-[#76b9ed] " + (active ? "inset-x-0" : "inset-x-2")} />}
    </button>
  );
}

function Taskbar() {
  return (
    <footer className={"flex h-20 shrink-0 items-stretch bg-[#010307] text-white " + SEGOE}>
      <Task label="Start"><WindowsIcon /></Task>
      <Task label="Search">
        <svg viewBox="0 0 32 32" className="size-8" fill="none" stroke="#fff" strokeWidth="2"><circle cx="21" cy="11" r="10" /><path d="M14 18 1 31" /></svg>
      </Task>
      <Task label="Task View">
        <svg viewBox="0 0 40 28" className="h-7 w-10" fill="none" stroke="#fff" strokeWidth="2"><path d="M9 1H31V27H9ZM6 5H1V23H6M34 5H39V23H34" /></svg>
      </Task>
      <div className="ml-[6px] flex gap-[2px]">
        <Task label="Internet Explorer" running active><ExplorerE /></Task>
        <Task label="File Explorer" running><FolderLarge /></Task>
        <Task label="Command Prompt"><ConsoleIcon /></Task>
        <Task label="Chrome" running><ChromeIcon /></Task>
        <Task label="NetBeans" running><Cube className="h-12 w-[46px]" /></Task>
      </div>
      <div className="ml-auto flex items-center">
        <svg viewBox="0 0 34 28" className="h-7 w-[34px]" fill="none" stroke="#fff" strokeWidth="2" aria-label="Network">
          <path d="M10 2H32V20H6M1 2H9V12H1ZM5 12V27M19 20V26M11 26H26M5 5V8" />
        </svg>
        <svg viewBox="0 0 34 30" className="ml-[14px] h-[30px] w-[34px]" fill="none" aria-label="Volume muted">
          <path d="M1 9H5L12 2V26L5 19H1Z" stroke="#fff" strokeWidth="2" />
          <circle cx="24" cy="20" r="9.500" fill="#dc2626" />
          <path d="M20 16 28 24M28 16 20 24" stroke="#fff" strokeWidth="2.200" />
        </svg>
        <svg viewBox="0 0 34 34" className="ml-[20px] size-[34px]" fill="none" stroke="#fff" strokeWidth="2" aria-label="Pen">
          <path d="M9 20C1 19-1 31 8 32M12 32 13 24 25 3 29 5 18 27ZM23 5 21 4 14 15M27 14C33 13 34 20 27 20" />
        </svg>
        <svg viewBox="0 0 48 28" className="ml-[22px] h-7 w-12" fill="none" stroke="#fff" strokeWidth="2" aria-label="Keyboard">
          <rect x="1" y="1" width="45" height="25" rx="1" />
          <path d="M7 7.500H41" strokeDasharray="2 2" />
          <path d="M7 13.500H12M14 13.500H34M36 13.500H41" strokeDasharray="5 2 2 2 2 2 2 2 2 2" />
          <path d="M7 19.500H12M15 19.500H33M36 19.500H41" />
        </svg>
        <div className="ml-[18px] w-[112px] text-center text-[23px] leading-[37px]">
          <div>2:42 AM</div>
          <div>3/1/2017</div>
        </div>
        <svg viewBox="0 0 50 50" className="ml-[34px] mt-[14px] size-[50px]" aria-label="Notifications">
          <path d="M1 1H33V27H18L10 34V27H1Z" fill="#fff" />
          <path d="M7 8H27M7 14H27M7 20H27" stroke="#010307" strokeWidth="2" />
          <circle cx="31" cy="31" r="16.500" fill="#222" stroke="#888" />
          <text x="31" y="39" fill="#fff" fontSize="23" fontWeight="600" textAnchor="middle">1</text>
        </svg>
        <span className="ml-6 h-20 w-[9px] border-l-2 border-[#666]" />
      </div>
    </footer>
  );
}

export default function App() {
  return (
    <div className={"relative flex h-screen flex-col overflow-hidden bg-[#efefef] text-black " + TAHOMA}>
      <header className={"shrink-0 bg-white " + SEGOE}>
        <div className="flex h-12 items-center pb-[3px] pl-[2px] pr-[39px]">
          <Cube className="h-[34px] w-8" outlined />
          <h1 className="ml-[5px] text-[23px] leading-[30px] text-[#999]">pizzamvcfile - NetBeans IDE 8.2</h1>
          <div className="ml-auto flex items-center gap-[72px]">
            <button type="button" aria-label="Minimize"><svg viewBox="0 0 20 20" className="size-5"><path d="M0 9H20" stroke="#999" strokeWidth="2" /></svg></button>
            <button type="button" aria-label="Restore"><svg viewBox="0 0 20 20" className="size-5" fill="none" stroke="#999" strokeWidth="2"><path d="M1 5H15V19H1ZM5 5V1H19V15H15" /></svg></button>
            <button type="button" aria-label="Close"><svg viewBox="0 0 20 20" className="size-5"><path d="M0.500 0.500 19.500 19.500M19.500 0.500 0.500 19.500" stroke="#999" strokeWidth="1.700" /></svg></button>
          </div>
        </div>
        <div className="flex h-[35px] items-start justify-between pl-1 pr-px">
          <nav className="flex gap-2 text-[23px] leading-[33px] text-[#666]">
            {["File", "Edit", "View", "Navigate", "Source", "Refactor", "Run", "Debug", "Profile", "Team", "Tools", "Window", "Help"].map((m) => (
              <button key={m} type="button">{m}</button>
            ))}
          </nav>
          <label className={"-mt-[2px] flex h-9 w-[210px] border border-[#7f99b5] bg-white " + TAHOMA}>
            <span className="flex w-[25px] items-center justify-center bg-[#efefef]">
              <svg viewBox="0 0 20 14" className="h-[14px] w-5" aria-label="Search">
                <circle cx="6" cy="5.500" r="4.500" fill="#cfe4f6" stroke="#48627d" strokeWidth="1.400" />
                <path d="M9 9 13 13.500" stroke="#222" strokeWidth="2.200" />
                <path d="M14 5.500H19L16.500 8Z" fill="#000" />
              </svg>
            </span>
            <input className="h-[18px] w-full pl-[3px] text-[11px] leading-[18px] outline-none placeholder:text-[#777]" placeholder="Search (Ctrl+I)" />
          </label>
        </div>
      </header>
      <MainToolbar />
      <div className="flex min-h-0 flex-1 gap-1 pl-[3px] pr-[3px] pt-[7px]">
        <ProjectsPanel />
        <div className="flex min-w-0 flex-1 flex-col gap-[5px]">
          <Editor />
          <Output />
        </div>
      </div>
      <div className="flex h-6 shrink-0 items-center justify-end text-[11px] leading-[18px]">
        <span className="w-[111px] border-l border-[#999] text-center">22:11</span>
        <span className="w-[27px] border-l border-[#999] pl-[3px]">INS</span>
      </div>
      <Taskbar />
      <Browser />
    </div>
  );
}
